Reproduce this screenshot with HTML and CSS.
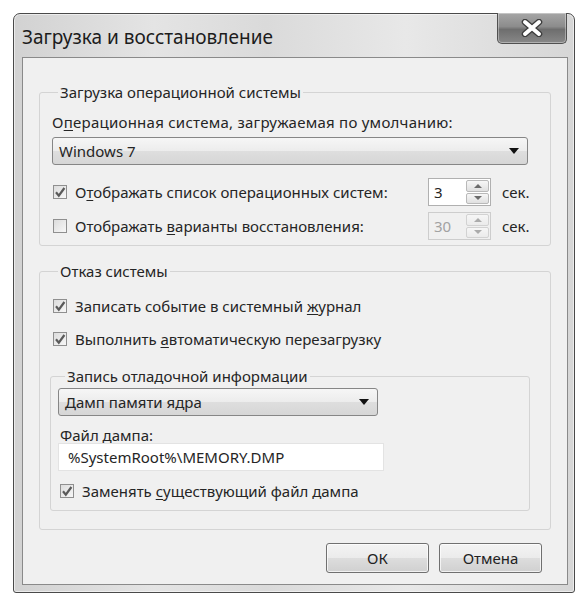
FILE: index.html
```html
<!DOCTYPE html>
<html lang="ru">
<head>
  <meta charset="UTF-8" />
  <meta name="viewport" content="width=device-width, initial-scale=1.0"/>
  <title>Загрузка и восстановление</title>
  <link rel="stylesheet" href="styles.css">
</head>
<body>

  <div class="window">
    <div class="titlebar">
      <span class="title">Загрузка и восстановление</span>
      <div class="close">
        <svg width="22" height="18" viewBox="0 0 22 18">
          <path d="M4 3 L18 15 M18 3 L4 15" stroke="#3c3c3c" stroke-width="6.5" stroke-linecap="round"/>
          <path d="M4 3 L18 15 M18 3 L4 15" stroke="#ffffff" stroke-width="4" stroke-linecap="round"/>
        </svg>
      </div>
    </div>

    <div class="client">

      <fieldset class="group group-boot">
        <legend>Загрузка операционной системы</legend>
        <div class="text">О<u>п</u>ерационная система, загружаемая по умолчанию:</div>
        <div class="combo combo-os">
          <span>Windows 7</span>
          <span class="arrow"></span>
        </div>

        <div class="row row-first">
          <label class="check">
            <span class="box checked">
              <svg width="12" height="12" viewBox="0 0 12 12"><path d="M2 6.2 L4.8 9.6 L10.4 2" fill="none" stroke="#5a5a5a" stroke-width="2.2"/></svg>
            </span>
            <span>О<u>т</u>ображать список операционных систем:</span>
          </label>
          <div class="spin">
            <span class="spin-value">3</span>
            <div class="spin-btns">
              <span class="spin-btn up"></span>
              <span class="spin-btn down"></span>
            </div>
          </div>
          <span class="unit">сек.</span>
        </div>

        <div class="row">
          <label class="check">
            <span class="box"></span>
            <span>Отображать <u>в</u>арианты восстановления:</span>
          </label>
          <div class="spin disabled">
            <span class="spin-value">30</span>
            <div class="spin-btns">
              <span class="spin-btn up"></span>
              <span class="spin-btn down"></span>
            </div>
          </div>
          <span class="unit">сек.</span>
        </div>
      </fieldset>

      <fieldset class="group group-fail">
        <legend>Отказ системы</legend>

        <label class="check line">
          <span class="box checked">
            <svg width="12" height="12" viewBox="0 0 12 12"><path d="M2 6.2 L4.8 9.6 L10.4 2" fill="none" stroke="#5a5a5a" stroke-width="2.2"/></svg>
          </span>
          <span>Записать событие в системный <u>ж</u>урнал</span>
        </label>
        <label class="check line line-next">
          <span class="box checked">
            <svg width="12" height="12" viewBox="0 0 12 12"><path d="M2 6.2 L4.8 9.6 L10.4 2" fill="none" stroke="#5a5a5a" stroke-width="2.2"/></svg>
          </span>
          <span>Выполнить <u>а</u>втоматическую перезагрузку</span>
        </label>

        <fieldset class="group group-debug">
          <legend>Запись отладочной информации</legend>
          <div class="combo combo-dump">
            <span>Дамп памяти ядра</span>
            <span class="arrow"></span>
          </div>
          <div class="text field-label">Файл дампа:</div>
          <div class="text-input">%SystemRoot%\MEMORY.DMP</div>
          <label class="check line replace">
            <span class="box checked">
              <svg width="12" height="12" viewBox="0 0 12 12"><path d="M2 6.2 L4.8 9.6 L10.4 2" fill="none" stroke="#5a5a5a" stroke-width="2.2"/></svg>
            </span>
            <span>Заменять <u>с</u>уществующий файл дампа</span>
          </label>
        </fieldset>
      </fieldset>

      <div class="buttons">
        <button>ОК</button>
        <button>Отмена</button>
      </div>

    </div>
  </div>

</body>
</html>
```

FILE: styles.css
```css
* {
  box-sizing: border-box;
}

body {
  margin: 0;
  background: #ffffff;
  font-family: "Noto Sans", "Open Sans", sans-serif;
  font-size: 15px;
  color: #252525;
}

u {
  text-decoration-thickness: 1px;
  text-underline-offset: 2px;
}

.window {
  margin: 13px 0 0 13px;
  width: 562px;
  height: 580px;
  border: 1px solid #4a4a4a;
  border-radius: 7px 7px 3px 3px;
  padding: 0 6px 7px 8px;
  display: flex;
  flex-direction: column;
  background: linear-gradient(90deg, #d2d2d2 0%, #e4e4e4 25%, #dadada 45%, #e8e8e8 70%, #d6d6d6 100%);
  box-shadow: inset 0 0 0 1px rgba(255, 255, 255, 0.55);
}

.titlebar {
  height: 43px;
  flex-shrink: 0;
  display: flex;
  justify-content: space-between;
  align-items: flex-start;
}

.title {
  margin-top: 11px;
  font-size: 19px;
  line-height: 24px;
  color: #1c1c1c;
}

.close {
  width: 70px;
  height: 31px;
  margin-top: -1px;
  margin-right: 1px;
  border: 1px solid #505050;
  border-top: none;
  border-radius: 0 0 5px 5px;
  background: linear-gradient(#a6a6a6 0%, #8c8c8c 45%, #6e6e6e 55%, #888888 100%);
  box-shadow: inset 0 0 0 1px rgba(255, 255, 255, 0.35);
  display: flex;
  align-items: center;
  justify-content: center;
}

.client {
  flex: 1;
  border: 1px solid #8a8a8a;
  background: #f0f0f0;
  padding: 0 16px 8px 16px;
  display: flex;
  flex-direction: column;
}

fieldset.group {
  margin: 0;
  min-width: 0;
  border: 1px solid #d4d4d4;
  border-radius: 3px;
}

legend {
  margin-left: 6px;
  padding: 0 2px;
  line-height: 18px;
}

.text {
  line-height: 18px;
}

.group-boot {
  margin-top: 25px !important;
  padding: 12px 12px 5px 12px;
}

.group-boot > .text {
  letter-spacing: 0.25px;
}

.combo {
  height: 28px;
  border: 1px solid #868686;
  border-radius: 3px;
  background: linear-gradient(#f6f6f6 0%, #ececec 50%, #dedede 51%, #d6d6d6 100%);
  display: flex;
  align-items: center;
  justify-content: space-between;
  padding: 0 8px 0 6px;
}

.arrow {
  width: 0;
  height: 0;
  border-left: 5px solid transparent;
  border-right: 5px solid transparent;
  border-top: 6px solid #111111;
}

.combo-os {
  margin-top: 6px;
  width: 476px;
}

.row {
  display: flex;
  align-items: center;
  height: 28px;
  margin-top: 6px;
}

.row-first {
  margin-top: 13px;
}

.check {
  display: flex;
  align-items: center;
  flex: 1;
}

.box {
  width: 14px;
  height: 14px;
  margin: 0 8px 0 1px;
  border: 1px solid #8f8f8f;
  background: linear-gradient(135deg, #dcdcdc, #f7f7f7);
  display: flex;
  align-items: center;
  justify-content: center;
  flex-shrink: 0;
}

.spin {
  width: 63px;
  height: 28px;
  display: flex;
  border: 1px solid #b0b0b0;
  background: #ffffff;
}

.spin-value {
  flex: 1;
  padding-left: 5px;
  line-height: 26px;
}

.spin-btns {
  width: 25px;
  padding: 1px;
  display: flex;
  flex-direction: column;
  gap: 1px;
}

.spin-btn {
  flex: 1;
  border: 1px solid #b9b9b9;
  border-radius: 2px;
  background: linear-gradient(#f7f7f7, #e0e0e0);
  display: flex;
  align-items: center;
  justify-content: center;
}

.spin-btn::before {
  content: "";
  border-left: 4px solid transparent;
  border-right: 4px solid transparent;
}

.up::before {
  border-bottom: 4px solid #6c6c6c;
}

.down::before {
  border-top: 4px solid #6c6c6c;
}

.spin.disabled {
  background: #f0f0f0;
  border-color: #cdcdcd;
  color: #a2a2a2;
}

.spin.disabled .spin-btn {
  border-color: #d2d2d2;
  background: linear-gradient(#f6f6f6, #ebebeb);
}

.spin.disabled .up::before {
  border-bottom-color: #ababab;
}

.spin.disabled .down::before {
  border-top-color: #ababab;
}

.unit {
  width: 47px;
  padding-left: 11px;
}

.group-fail {
  margin-top: 16px !important;
  padding: 16px 12px 18px 12px;
}

.line {
  flex: none;
  height: 20px;
}

.line-next {
  margin-top: 13px;
}

.group-debug {
  margin: 18px 8px 0 -2px !important;
  padding: 3px 7px 9px 7px;
}

.group-debug legend {
  margin-left: 7px;
}

.combo-dump {
  width: 320px;
}

.field-label {
  margin-top: 11px;
  padding-left: 2px;
  line-height: 16px;
}

.text-input {
  width: 326px;
  height: 28px;
  border: 1px solid #e3e3e3;
  background: #ffffff;
  padding-left: 9px;
  line-height: 26px;
}

.replace {
  margin-top: 10px;
  padding-left: 1px;
}

.buttons {
  display: flex;
  justify-content: flex-end;
  gap: 10px;
  margin-top: 13px;
  padding-right: 9px;
}

button {
  width: 103px;
  height: 30px;
  font-family: inherit;
  font-size: 15px;
  color: #222222;
  border: 1px solid #707070;
  border-radius: 3px;
  background: linear-gradient(#f3f3f3 0%, #ebebeb 50%, #dddddd 51%, #d0d0d0 100%);
  box-shadow: inset 0 0 0 1px rgba(255, 255, 255, 0.7);
}
```
